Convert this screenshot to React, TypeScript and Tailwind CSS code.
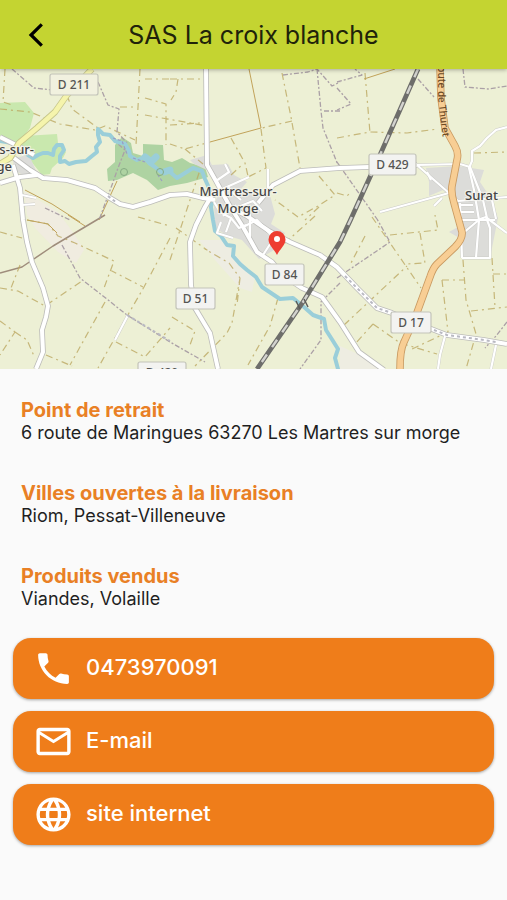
import type { ReactNode } from "react";
import { MdLanguage, MdMailOutline, MdPhone } from "react-icons/md";

const infos = [
  { title: "Point de retrait", text: "6 route de Maringues 63270 Les Martres sur morge" },
  { title: "Villes ouvertes à la livraison", text: "Riom, Pessat-Villeneuve" },
  { title: "Produits vendus", text: "Viandes, Volaille" },
];

// dashed farm tracks
const tracks = [
  "M5 69L3 102L12 105M0 109L30 112L60 124L95 130L105 126L135 140",
  "M140 69L136 145M145 79H170M145 98L166 104V145M120 107H137M145 115L207 126",
  "M67 95L72 109L98 128M170 79H200M170 125L200 123M178 79L176 92L171 100",
  "M170 144L185 149L210 142M185 149L203 164M231 138L245 163L248 176M231 175L243 164",
  "M292 121L262 128M261 129L266 168L248 177M282 73L291 117L300 168",
  "M337 138L370 132L407 133L438 129M365 73L370 133M474 153L507 152",
  "M319 176L335 195L318 206L298 217L275 200M319 207L305 220M337 193L347 196L351 192",
  "M0 232L22 238M27 220L48 224L58 236L75 243L114 261L104 288M110 270L143 287M138 217L170 226",
  "M170 238L144 287L129 313L98 368M105 302L70 365M20 265L11 288M0 288L18 291L45 306L82 281",
  "M0 321L15 332L0 355M15 332L27 340L34 356M46 355L72 366M116 342L145 357L170 328",
  "M170 260L200 170M176 228L207 250L205 249L229 263L240 278L232 323L227 333L195 366M240 278L237 305",
  "M172 317L195 331L190 345M278 298L270 326L248 365M315 216L285 243",
  "M372 217L390 243L421 288M390 235L438 230L435 215M420 233L425 263L405 264M344 325L407 266",
  "M365 236L350 265M463 260L466 300L476 334L466 369M442 280H465M442 280L448 332L412 349M471 311L507 307",
  "M492 258L495 307M493 274H507M373 324L400 343L437 354M373 324L355 344",
];

// footpaths, drawn in a mauve dash
const paths = [
  "M12 69L34 88L52 90M98 82L108 105L119 109L117 132L127 143M110 137L125 150L118 168L112 185L99 220",
  "M283 75L308 72L317 69L332 86L340 82M324 111H340M317 69L321 111L323 128L338 165",
  "M337 88L351 104L337 110M337 82L362 75L355 69M463 69L465 87L488 89L507 86M337 162L377 219",
  "M62 245L80 278L103 296L127 315L170 342L205 362M337 278L390 242L377 219M507 322L496 336L485 348",
  "M340 283L321 302V340L300 369M45 208L70 220M418 79L434 97",
];

const roads = [
  "M0 137L20 147L34 155M0 183L20 177L37 175",
  "M14 158L30 170L43 178L67 180L95 188L110 198L120 204L133 207L150 202L170 195L187 194L203 198L215 200",
  "M13 165L20 188L23 220L27 242L32 262L43 288L48 306L46 317L42 330L43 352L36 369",
  "M215 190L205 207L196 225L190 242L191 285L195 308L210 333L218 369",
  "M206 69L207 165L216 181L228 203L243 227L257 252L272 262L284 276L302 288L322 297L340 322L359 352L384 370",
  "M258 203L273 185L300 171L340 168L369 167L417 165",
  "M225 205L247 216L269 231L290 242L320 255L337 267L357 288L377 308L392 313L434 330L447 335L484 340L507 344",
];

// narrower streets
const lanes = [
  "M417 165L460 164L470 167L483 200L487 218L507 233M417 165L449 193L458 201L507 197",
  "M216 181L229 172L225 164M220 190L229 186L249 177M228 187L233 193L241 200M268 169V188",
  "M214 202L220 212L231 218L226 232M221 222L217 233L233 238M231 218L239 228L246 225",
  "M236 205L223 216M243 227L257 220L274 238L263 255M250 237V214M238 207L253 201L262 211",
  "M507 127L496 130L487 138L480 146L472 151L472 161L469 168L474 190L479 220L476 258",
  "M462 258H490V228L486 217L480 219L462 234M461 205H473M461 212H474M461 220H495M492 200L496 219M460 203L462 258",
  "M380 212L449 193M427 172L431 180M128 315L115 340M445 336L440 355L438 369M496 345L491 369M442 198L434 206",
  "M22 155L32 150M22 195L36 198M22 205L35 204",
];

type ShieldProps = { x: number; y: number; w: number; label: string; fill?: string };

function Shield({ x, y, w, label, fill = "#f3f3f1" }: ShieldProps) {
  return (
    <g>
      <rect x={x} y={y} width={w} height="21" rx="2" fill={fill} stroke="#c3c4ba" strokeWidth="1.2" />
      <text x={x + w / 2} y={y + 15} textAnchor="middle" fontSize="12" fontWeight="500" fill="#555553">
        {label}
      </text>
    </g>
  );
}

function Map() {
  return (
    <svg
      role="img"
      aria-label="Carte du point de retrait"
      viewBox="0 69 507 300"
      preserveAspectRatio="xMidYMid slice"
      className="block h-[300px] w-full bg-[#edf0d5] font-['Noto_Sans',sans-serif]"
      fill="none"
      strokeLinejoin="round"
    >
      <rect y="69" width="507" height="300" fill="#edf0d5" />
      <path d="M24 191L58 212L75 235L84 250L76 263L58 252L35 228L27 215Z" fill="#f0ece0" />
      <path d="M199 240L222 240L238 258L255 277L252 292L240 288L215 260ZM340 346L362 356L381 369H340Z" fill="#eeede2" />
      <path d="M0 103L25 102L34 113L30 128L24 136L57 134L58 143L66 152L63 158L52 168L50 174L42 175L30 160L14 145L0 136Z" fill="#c9e8ae" />
      <path
        d="M122 137L131 143L133 153L143 156V144L163 145L164 160L172 162L182 158L190 163L205 167L208 177L187 183L170 186L158 190L147 180L133 173L117 180L108 181L107 169L115 162V145Z"
        fill="#aed3a2"
      />
      <g fill="#dcdcd9">
        <path d="M13 158L29 155L34 166L37 173L28 178L14 170ZM190 160L207 155L212 165L228 164L234 175L247 182L240 190L255 192L270 195L275 214L271 224L285 233L274 250L259 259L242 240L228 236L215 228L214 205L219 192L207 170L194 164Z" />
        <path d="M426 168L458 166L484 170L480 182L492 200L498 218L490 258H462L463 240L449 232L458 227L455 200L443 190L429 196V182Z" />
      </g>

      <g stroke="#a58442" strokeWidth="1">
        <path d="M249 69L261 128L210 142M25 190L52 204L80 222M117 181L99 220M27 220L48 224L57 233M68 215L85 226M364 79L395 69" stroke="#c1a259" />
        <path d="M0 273L22 267L53 246L105 215" stroke="#9f8d7c" strokeWidth="1.5" />
      </g>
      <g stroke="#bda963" strokeWidth="1.2" strokeDasharray="7 4 2 4" opacity=".8">
        {tracks.map((d) => (
          <path key={d} d={d} />
        ))}
      </g>
      <g stroke="#aba0a6" strokeWidth="1.3" strokeDasharray="5 2 2 2">
        {paths.map((d) => (
          <path key={d} d={d} />
        ))}
      </g>

      <g stroke="#9aced9" strokeWidth="4" strokeLinecap="round">
        <path d="M0 141L12 143M28 155L33 158L38 155L43 153L48 153L53 155L54 149L57 145L62 145L64 150L60 156L60 162L65 161L69 164L76 162L86 161L92 156L97 152L96 147L100 142L98 135L98 129L103 134L110 135L115 141L125 144L129 151L130 156L137 160L145 157L149 163L155 167L161 172L170 172L177 178L185 173L193 168L202 171L205 179L209 188L213 198L211 207L213 220L215 231L221 236L227 245L234 246L233 256L240 264L247 270L256 277L262 287L271 293L280 299L293 298L304 307L313 315L324 319L326 330L333 341L338 349L335 358L338 369" />
        <path d="M145 157L151 162L156 157M164 172L170 170" strokeWidth="7" />
      </g>
      <path d="M113 138L122 141L127 154M133 158L145 162M162 181L158 175" stroke="#9b9bc2" strokeWidth="1.2" strokeDasharray="3 2" />
      <circle cx="124" cy="172" r="3.5" stroke="#86ab83" />
      <circle cx="160" cy="172" r="3.5" stroke="#86ab83" />

      <g stroke="#cbcbc8" strokeWidth="3">
        {lanes.map((d) => (
          <path key={d} d={d} />
        ))}
      </g>
      <g stroke="#bcbcb9" strokeWidth="5.6">
        {roads.map((d) => (
          <path key={d} d={d} />
        ))}
      </g>
      <g stroke="#fff" strokeWidth="2.2">
        {lanes.map((d) => (
          <path key={d} d={d} />
        ))}
      </g>
      <g stroke="#fff" strokeWidth="4">
        {roads.map((d) => (
          <path key={d} d={d} />
        ))}
      </g>
      <path d="M345 276L357 288L377 308L392 313M434 330L447 335L484 340L496 342M108 196L117 203M127 315L170 341" stroke="#b9b9c2" strokeWidth="2" strokeDasharray="3 3" />

      <path d="M92 69L67 95L55 112L37 128L19 143L10 158L0 164" stroke="#c5c58b" strokeWidth="6.5" />
      <path d="M92 69L67 95L55 112L37 128L19 143L10 158L0 164" stroke="#f5f4ac" strokeWidth="4.8" />
      <path d="M440 69L441 98L445 128L455 146Q459 153 457 160L452 186Q451 193 454 203L462 232Q463 239 455 247L437 264Q433 268 430 277L415 318L404 342Q400 350 400 369" stroke="#c99a61" strokeWidth="7.5" />
      <path d="M440 69L441 98L445 128L455 146Q459 153 457 160L452 186Q451 193 454 203L462 232Q463 239 455 247L437 264Q433 268 430 277L415 318L404 342Q400 350 400 369" stroke="#f8ce94" strokeWidth="5.8" />

      <path d="M418 69L380 155L350 221L340 242L303 302L257 369" stroke="#6e6e6b" strokeWidth="4.8" />
      <path d="M418 69L380 155L350 221L340 242L303 302L257 369" stroke="#d3d3cf" strokeWidth="2.4" strokeDasharray="9 9" />
      <path d="M296 301L300 309M304 299L308 307" stroke="#5c5c58" strokeWidth="1.5" />

      <Shield x={50} y={74} w={48} label="D 211" fill="#f1f1df" />
      <Shield x={369} y={154} w={47} label="D 429" />
      <Shield x={176} y={288} w={39} label="D 51" />
      <Shield x={265} y={264} w={39} label="D 84" />
      <Shield x={391} y={312} w={40} label="D 17" />
      <Shield x={138} y={362} w={48} label="D 420" />

      <g fontSize="13" fontWeight="500" fill="#454545" stroke="#f5f5ee" strokeOpacity=".75" strokeWidth="2.5" className="[paint-order:stroke]">
        <text x="238" y="196" textAnchor="middle">Martres-sur-</text>
        <text x="238" y="213" textAnchor="middle">Morge</text>
        <text x="34" y="154" textAnchor="end">s-sur-</text>
        <text x="12" y="171" textAnchor="end">ge</text>
        <text x="465" y="200">Surat</text>
      </g>
      <path id="route-thuret" d="M438 60L438 98L443 140" />
      <text fontSize="10" fontWeight="500" fill="#6b4a26">
        <textPath href="#route-thuret">Route de Thuret</textPath>
      </text>

      <path d="M277 255C274 249 268.500 245 268.500 239.500A8.500 8.500 0 0 1 285.500 239.500C285.500 245 280 249 277 255Z" fill="#ee3d31" />
      <circle cx="277" cy="239" r="3" fill="#fff" />
    </svg>
  );
}

function ContactLink({ href, icon, children }: { href: string; icon: ReactNode; children: ReactNode }) {
  return (
    <a
      href={href}
      className="flex h-[61px] items-center gap-3 rounded-[18px] bg-[#ef7d1a] px-5 text-[22px] font-medium text-white shadow-[0_1px_3px_rgba(0,0,0,0.35)]"
    >
      {icon}
      <span className="pb-0.5">{children}</span>
    </a>
  );
}

export default function App() {
  return (
    <div className="min-h-screen bg-[#fafafa] font-[Inter,sans-serif] text-[#1f1f1f]">
      <header className="relative z-10 grid h-[69px] grid-cols-[48px_1fr_48px] items-center bg-[#c4d431] px-3 shadow-[0_1px_4px_rgba(0,0,0,0.3)]">
        <button type="button" aria-label="Retour" className="flex justify-center text-black">
          <svg viewBox="0 0 28 28" className="size-7" fill="none" stroke="currentColor" strokeWidth="3.2">
            <path d="M19.800 3.300L9 14L19.800 24.700" />
          </svg>
        </button>
        <h1 className="pt-0.5 text-center text-[25px] text-[#20230a]">SAS La croix blanche</h1>
      </header>
      <Map />
      <main className="pt-[29px]">
        <div className="space-y-[37px] px-[21px]">
          {infos.map((info) => (
            <section key={info.title}>
              <h2 className="text-xl leading-[24px] font-bold text-[#e98025]">{info.title}</h2>
              <p className="text-lg leading-[22px]">{info.text}</p>
            </section>
          ))}
        </div>
        <nav className="mt-7 space-y-3 px-[13px]">
          <ContactLink href="tel:0473970091" icon={<MdPhone size={41} />}>
            0473970091
          </ContactLink>
          <ContactLink href="#email" icon={<MdMailOutline size={41} />}>
            E-mail
          </ContactLink>
          <ContactLink href="#site" icon={<MdLanguage size={41} />}>
            site internet
          </ContactLink>
        </nav>
      </main>
    </div>
  );
}
